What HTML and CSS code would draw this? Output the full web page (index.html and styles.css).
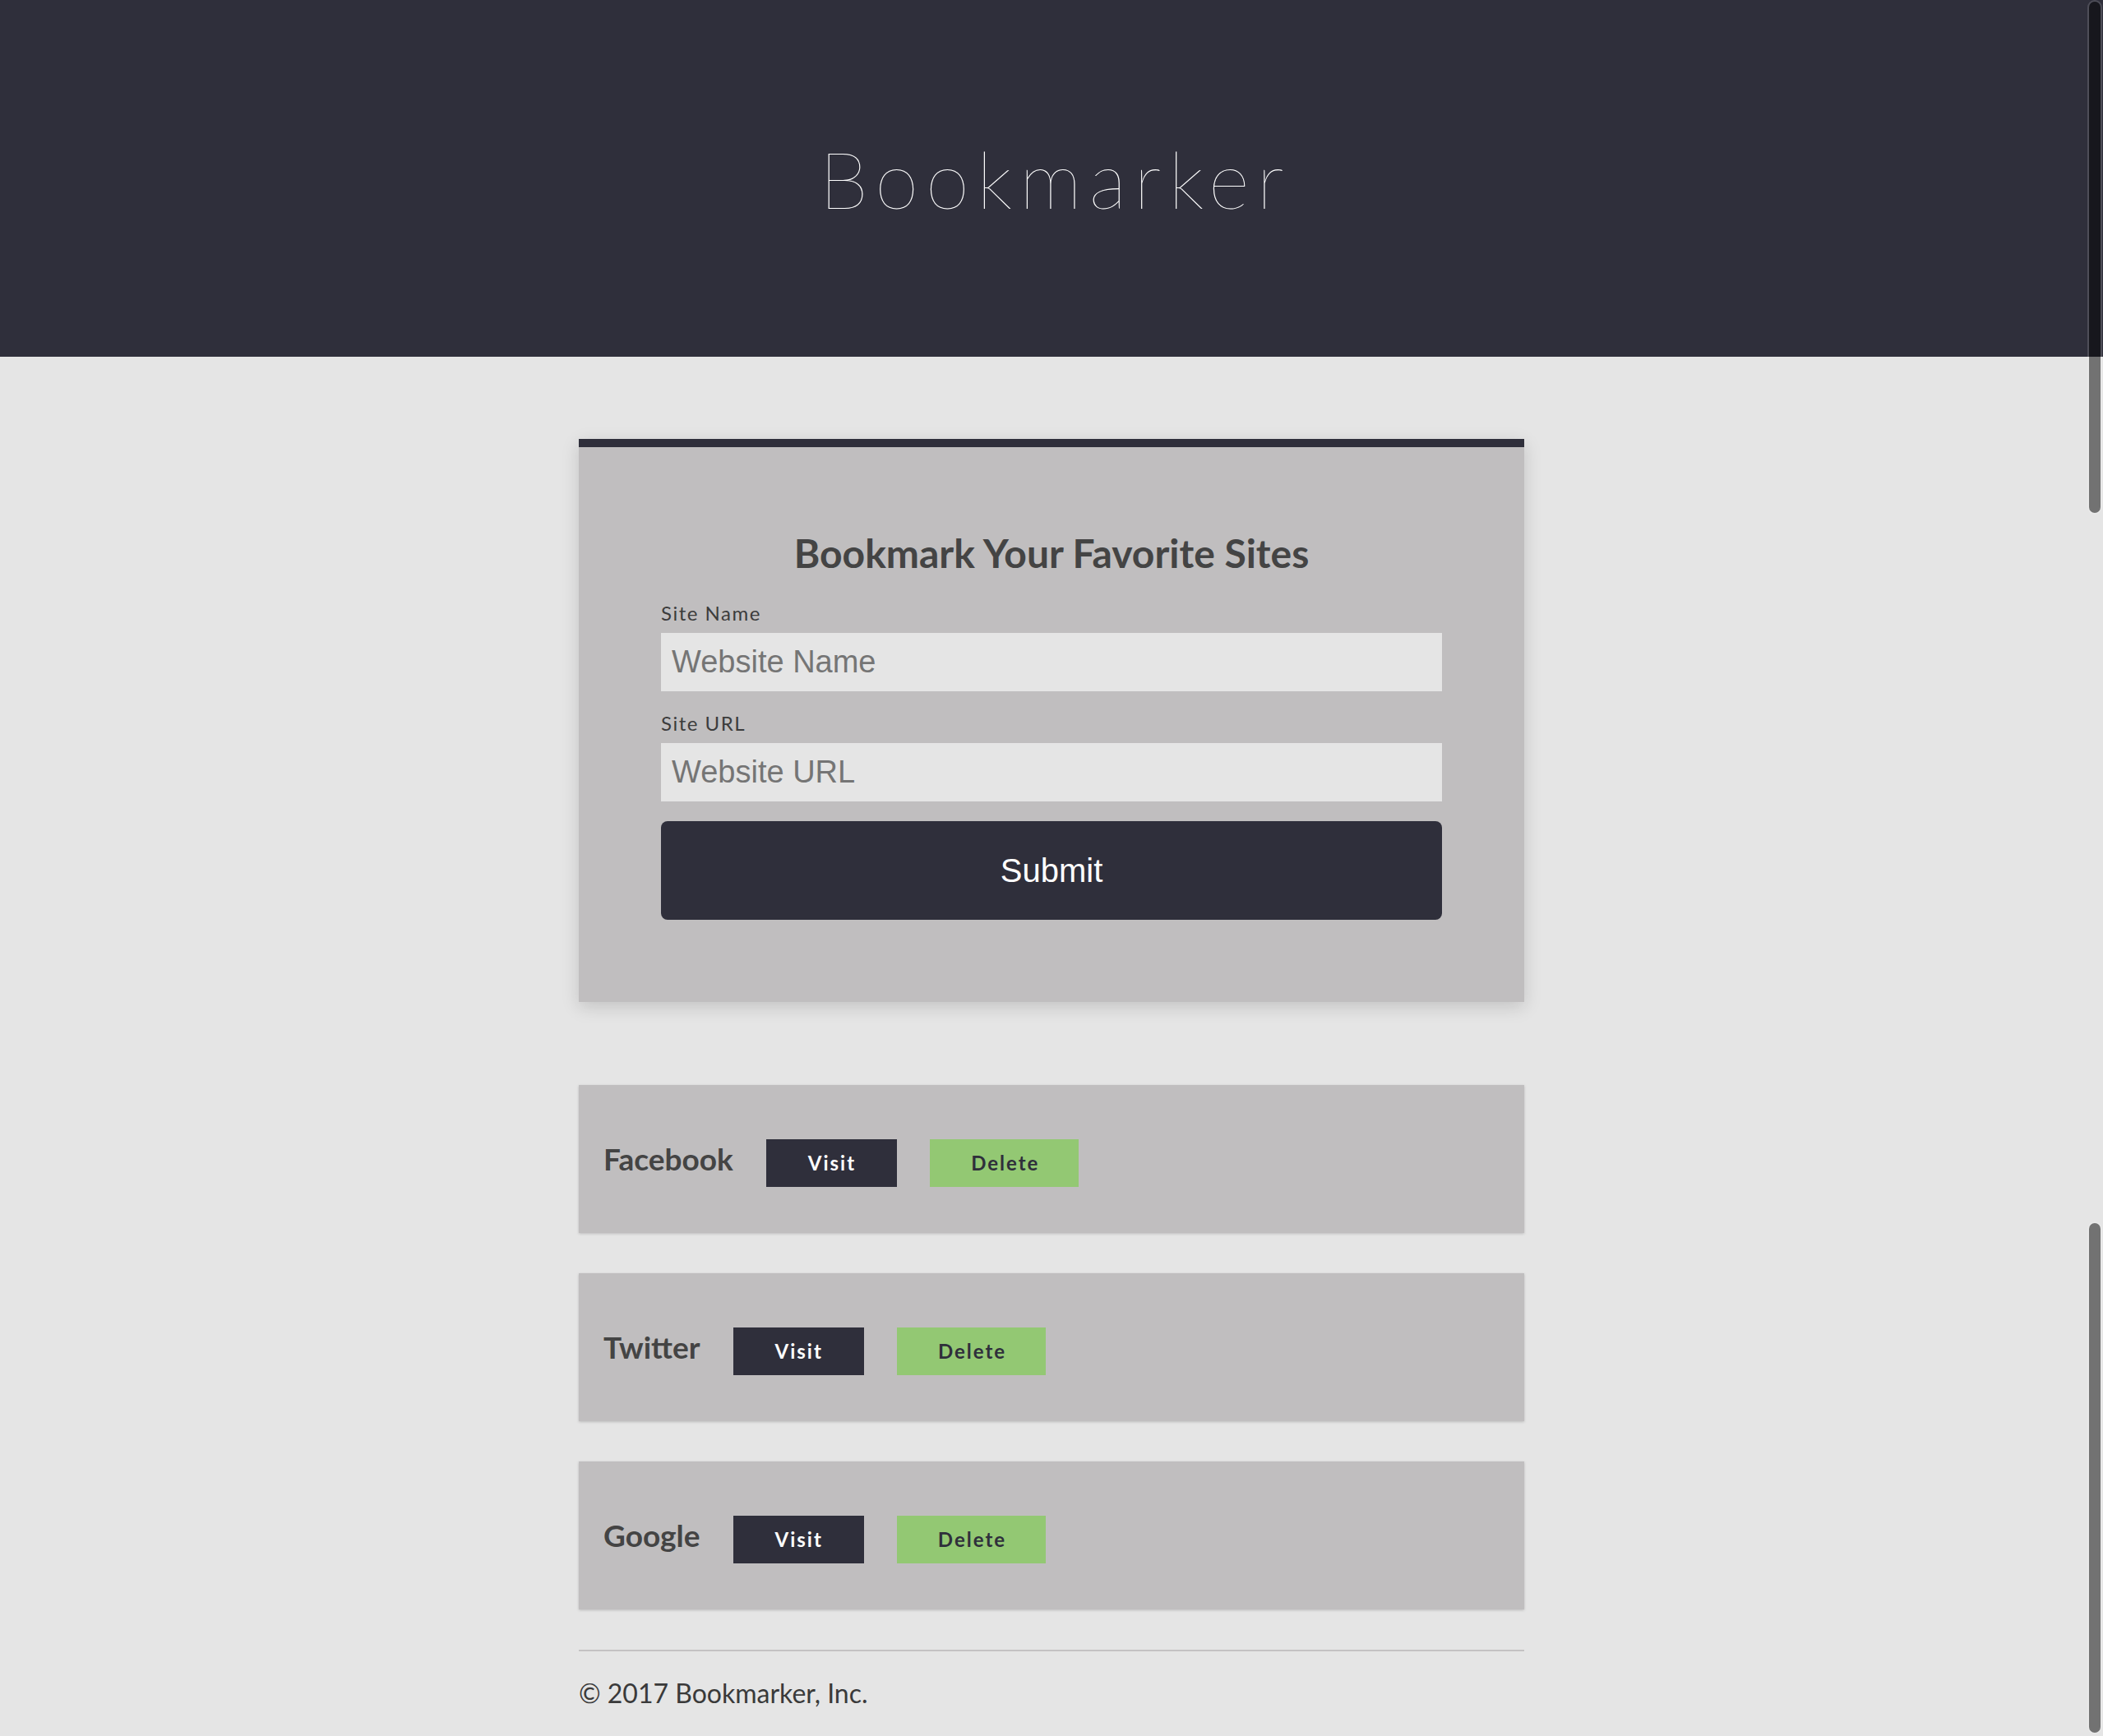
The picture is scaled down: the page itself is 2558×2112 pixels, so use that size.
FILE: index.html
```html
<!DOCTYPE html>
<html lang="en">
<head>
<meta charset="utf-8">
<title>Bookmarker</title>
<link rel="stylesheet" href="styles.css">
</head>
<body>
<header class="site-header">
  <h1 class="site-title">Bookmarker</h1>
</header>
<main class="container">
  <section class="form-card">
    <h2 class="form-title">Bookmark Your Favorite Sites</h2>
    <form class="bookmark-form">
      <div class="field">
        <label class="field-label" for="siteName">Site Name</label>
        <input class="field-input" type="text" id="siteName" placeholder="Website Name">
      </div>
      <div class="field">
        <label class="field-label" for="siteUrl">Site URL</label>
        <input class="field-input" type="text" id="siteUrl" placeholder="Website URL">
      </div>
      <button class="submit-btn" type="submit">Submit</button>
    </form>
  </section>
  <ul class="bookmark-list">
    <li class="bookmark">
      <h3 class="bookmark-name">Facebook</h3>
      <a class="btn btn-visit" href="#">Visit</a>
      <a class="btn btn-delete" href="#">Delete</a>
    </li>
    <li class="bookmark">
      <h3 class="bookmark-name">Twitter</h3>
      <a class="btn btn-visit" href="#">Visit</a>
      <a class="btn btn-delete" href="#">Delete</a>
    </li>
    <li class="bookmark">
      <h3 class="bookmark-name">Google</h3>
      <a class="btn btn-visit" href="#">Visit</a>
      <a class="btn btn-delete" href="#">Delete</a>
    </li>
  </ul>
  <footer class="site-footer">
    <p class="copyright">© 2017 Bookmarker, Inc.</p>
  </footer>
</main>
<div class="scroll-thumb scroll-thumb-top" aria-hidden="true"></div>
<div class="scroll-thumb scroll-thumb-bottom" aria-hidden="true"></div>
</body>
</html>
```
FILE: styles.css
```css
html, body {
  margin: 0;
  padding: 0;
}
body {
  background: #e5e5e5;
  font-family: Lato, "Noto Sans", sans-serif;
  color: #444;
}
.site-header {
  height: 434px;
  background: #2f2f3b;
  display: flex;
  align-items: center;
  justify-content: center;
}
.site-title {
  margin: 0;
  padding-left: 9px;
  font-size: 96px;
  line-height: 116px;
  font-weight: 100;
  letter-spacing: 9px;
  color: #fff;
}
.container {
  width: 1150px;
  margin: 0 auto;
  padding-top: 100px;
}
.form-card {
  background: #c0bebf;
  border-top: 10px solid #2f2f3b;
  padding: 100px;
  box-shadow: 0 6px 20px rgba(0, 0, 0, 0.15);
}
.form-title {
  margin: 0 0 29px;
  font-size: 48px;
  line-height: 58px;
  font-weight: 700;
  text-align: center;
  color: #444;
}
.bookmark-form {
  margin: 0;
}
.field {
  margin-bottom: 24px;
}
.field-label {
  display: block;
  margin-bottom: 9px;
  font-size: 24px;
  line-height: 30px;
  letter-spacing: 1.5px;
  color: #3c3c3c;
}
.field-input {
  display: block;
  width: 100%;
  box-sizing: border-box;
  height: 71px;
  border: 0;
  outline: none;
  background: #e5e5e5;
  padding: 0 13px;
  font-family: "Liberation Sans", Arial, sans-serif;
  font-size: 38px;
  color: #333;
}
.field-input::placeholder {
  color: #757575;
}
.submit-btn {
  display: block;
  width: 100%;
  height: 120px;
  border: 0;
  border-radius: 8px;
  background: #2f2f3b;
  color: #fff;
  font-family: "Liberation Sans", Arial, sans-serif;
  font-size: 40px;
}
.bookmark-list {
  list-style: none;
  margin: 101px 0 0;
  padding: 0;
  display: flex;
  flex-direction: column;
  gap: 49px;
}
.bookmark {
  height: 180px;
  box-sizing: border-box;
  padding: 66px 0 0 30px;
  background: #c0bebf;
  display: flex;
  align-items: baseline;
  gap: 40px;
  box-shadow: 0 1px 3px rgba(0, 0, 0, 0.18);
}
.bookmark-name {
  margin: 0;
  font-size: 37px;
  line-height: 46px;
  font-weight: 700;
  color: #444;
}
.btn {
  display: inline-block;
  padding: 14px 48px 14px 50px;
  font-size: 24px;
  line-height: 30px;
  font-weight: 700;
  letter-spacing: 2px;
  text-decoration: none;
}
.btn-visit {
  padding-left: 51px;
  padding-right: 50px;
  background: #2f2f3b;
  color: #fff;
}
.btn-delete {
  background: #93c873;
  color: #2f2f3b;
}
.site-footer {
  margin-top: 49px;
  border-top: 2px solid #c4c2c3;
  padding-top: 31px;
}
.copyright {
  margin: 0;
  font-size: 32px;
  line-height: 40px;
  color: #3a3a3a;
}
.scroll-thumb {
  position: fixed;
  right: 3px;
  width: 14px;
  border-radius: 7px;
  background: rgba(0, 0, 0, 0.5);
  box-shadow: 0 0 0 2px rgba(255, 255, 255, 0.15);
}
.scroll-thumb-top {
  top: 2px;
  height: 622px;
}
.scroll-thumb-bottom {
  top: 1488px;
  height: 620px;
}
```
